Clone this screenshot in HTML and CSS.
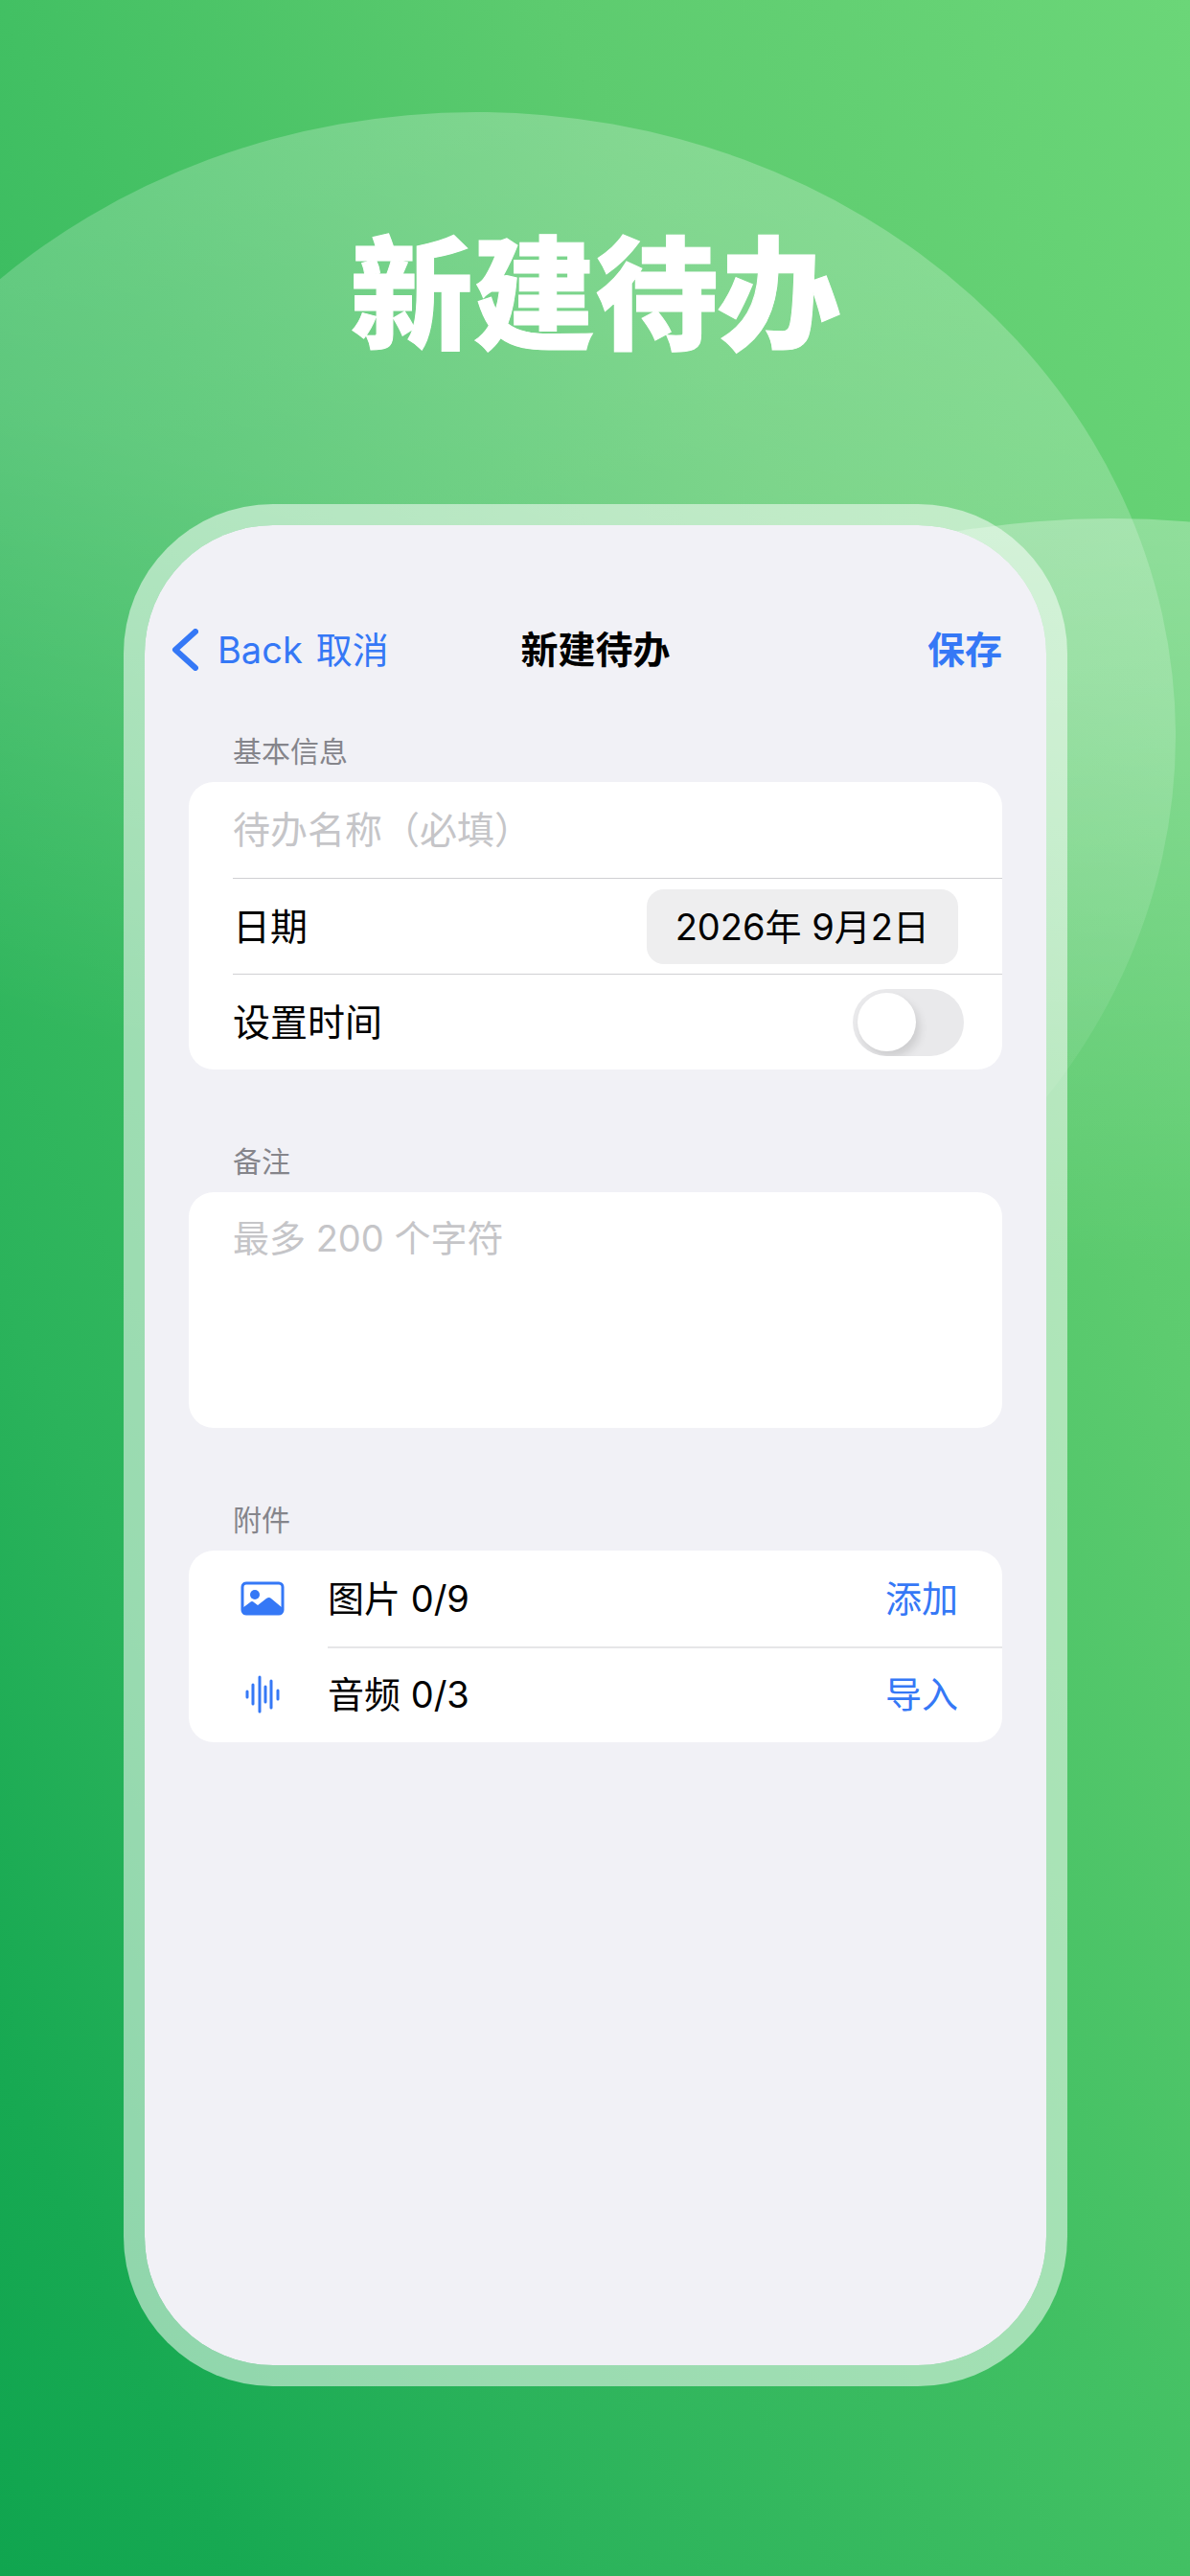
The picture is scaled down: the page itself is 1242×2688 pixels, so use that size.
FILE: index.html
```html
<!DOCTYPE html>
<html lang="zh-CN">
<head>
    <meta charset="UTF-8">
    <meta name="viewport" content="width=device-width, initial-scale=1.0">
    <title>新建待办</title>
    <link rel="stylesheet" href="styles.css">
</head>
<body>
    <svg class="backdrop" viewBox="0 0 1242 2688" preserveAspectRatio="none" aria-hidden="true">
        <defs>
            <linearGradient id="fadeLeft" x1="0.65" y1="0" x2="0.35" y2="1">
                <stop offset="0" stop-color="#fff" stop-opacity="0.24"/>
                <stop offset="0.35" stop-color="#fff" stop-opacity="0.18"/>
                <stop offset="0.8" stop-color="#fff" stop-opacity="0"/>
            </linearGradient>
            <linearGradient id="fadeRight" x1="0" y1="0" x2="0" y2="1">
                <stop offset="0" stop-color="#fff" stop-opacity="0.28"/>
                <stop offset="0.6" stop-color="#fff" stop-opacity="0"/>
            </linearGradient>
        </defs>
        <ellipse cx="497" cy="768" rx="730" ry="651" fill="url(#fadeLeft)"/>
        <ellipse cx="1160" cy="1192" rx="800" ry="651" fill="url(#fadeRight)"/>
    </svg>

    <main class="page">
        <h1 class="headline">新建待办</h1>

        <form class="phone">
            <header class="navbar">
                <div class="nav-left">
                    <a class="back" href="#">
                        <svg class="chevron" viewBox="0 0 28 44" aria-hidden="true">
                            <path d="M25 3 L4 22 L25 41" fill="none" stroke="currentColor" stroke-width="6" stroke-linecap="round" stroke-linejoin="round"/>
                        </svg>
                        Back
                    </a>
                    <button type="button" class="link">取消</button>
                </div>
                <h2 class="nav-title">新建待办</h2>
                <button type="submit" class="link save">保存</button>
            </header>

            <section class="group">
                <h3 class="group-title">基本信息</h3>
                <div class="card">
                    <div class="row">
                        <input type="text" class="field" id="name" aria-label="待办名称" placeholder="待办名称（必填）">
                    </div>
                    <div class="row">
                        <span>日期</span>
                        <button type="button" class="date">2026年 9月2日</button>
                    </div>
                    <div class="row">
                        <label for="setTime">设置时间</label>
                        <input type="checkbox" class="switch" id="setTime" role="switch">
                    </div>
                </div>
            </section>

            <section class="group">
                <h3 class="group-title"><label for="note">备注</label></h3>
                <div class="card">
                    <textarea class="field note" id="note" maxlength="200" placeholder="最多 200 个字符"></textarea>
                </div>
            </section>

            <section class="group">
                <h3 class="group-title">附件</h3>
                <div class="card attachments">
                    <div class="row">
                        <svg class="icon" viewBox="0 0 62 40" aria-hidden="true">
                            <rect x="10" y="4" width="42" height="32" rx="4" fill="none" stroke="currentColor" stroke-width="3"/>
                            <circle cx="23" cy="16" r="5" fill="currentColor"/>
                            <path d="M10 30 L18 24 Q20 22 22 24 L26 27 L35 20 Q38 18 40 20 L52 30 V34 Q52 36 49 36 H13 Q10 36 10 34 Z" fill="currentColor"/>
                        </svg>
                        <span class="label">图片 0/9</span>
                        <button type="button" class="link">添加</button>
                    </div>
                    <div class="row">
                        <svg class="icon" viewBox="0 0 62 40" aria-hidden="true">
                            <path d="M15 17 V23 M21 10 V30 M28 2 V38 M34 12 V28 M40 6 V34 M47 16 V25" fill="none" stroke="currentColor" stroke-width="3" stroke-linecap="round"/>
                        </svg>
                        <span class="label">音频 0/3</span>
                        <button type="button" class="link">导入</button>
                    </div>
                </div>
            </section>
        </form>
    </main>
</body>
</html>
```
FILE: styles.css
```css
* {
    box-sizing: border-box;
}

body {
    margin: 0;
    min-height: 100vh;
    position: relative;
    font-family: Inter, "Noto Sans CJK SC", sans-serif;
    font-size: 38px;
    line-height: 56px;
    color: #000;
    background: linear-gradient(to top right, #10a54f 0%, #17a952 10%, #2bb35b 25%, #42c063 50%, #5dcb6f 73%, #6bd678 100%);
}

/* the two pale ellipses behind the phone */
.backdrop {
    position: absolute;
    top: 0;
    left: 0;
    width: 100%;
    height: 100%;
}

.page {
    position: relative;
    display: flex;
    flex-direction: column;
    min-height: 100vh;
    padding: 216px 128px 198px 129px;
}

.headline {
    margin: 0 0 124px;
    font-size: 128px;
    line-height: 186px;
    font-weight: 900;
    text-align: center;
    color: #fff;
    -webkit-text-stroke: 1px #fff;
}

.phone {
    flex: 1;
    padding: 90px 46px;
    border: 22px solid rgba(255, 255, 255, 0.52);
    border-radius: 156px;
    background: #f1f1f6;
    background-clip: padding-box;
}

.navbar {
    display: grid;
    grid-template-columns: 1fr auto 1fr;
    align-items: center;
    height: 80px;
    margin-bottom: 44px;
}

.nav-left {
    display: flex;
    align-items: center;
    gap: 14px;
    margin-left: -18px;
}

.back {
    display: flex;
    align-items: center;
    gap: 20px;
    color: #3578f6;
    text-decoration: none;
}

.chevron {
    width: 28px;
    height: 44px;
}

.link {
    padding: 0;
    border: none;
    background: none;
    font: inherit;
    color: #3578f6;
    cursor: pointer;
}

.nav-title {
    margin: 0;
    font-size: 39px;
    font-weight: 600;
}

.save {
    justify-self: end;
    font-size: 39px;
    font-weight: 600;
}

.group {
    margin-bottom: 74px;
}

.group-title {
    margin: 0 46px 10px;
    font-size: 30px;
    line-height: 44px;
    font-weight: 400;
    color: #85858b;
}

.card {
    border-radius: 26px;
    background: #fff;
}

.row {
    display: flex;
    align-items: center;
    justify-content: space-between;
    height: 100px;
    margin-left: 46px;
    padding-right: 46px;
    font-size: 39px;
}

.row + .row {
    border-top: 1px solid #d0d0d3;
}

.field {
    display: block;
    width: 100%;
    padding: 0;
    border: none;
    outline: none;
    background: none;
    font: inherit;
    color: #000;
}

.field::placeholder {
    color: #c5c5c8;
    opacity: 1;
}

.note {
    height: 246px;
    padding: 20px 46px;
    resize: none;
}

.date {
    height: 78px;
    padding: 0 30px;
    border: none;
    border-radius: 18px;
    background: #eeeeef;
    font: inherit;
    font-size: 38px;
    color: #000;
}

.switch {
    appearance: none;
    flex: none;
    display: flex;
    align-items: center;
    width: 116px;
    height: 70px;
    margin: 0 -6px 0 0;
    padding: 0 5px;
    border-radius: 35px;
    background: #e9e9eb;
    overflow: hidden;
}

.switch::before {
    content: "";
    width: 61px;
    height: 61px;
    border-radius: 50%;
    background: #fff;
    box-shadow: 4px 6px 10px rgba(0, 0, 0, 0.12);
}

.switch:checked {
    justify-content: flex-end;
    background: #34c759;
}

.attachments .row {
    margin-left: 0;
    padding-left: 46px;
    font-size: 38px;
}

.attachments .row + .row {
    border-top: none;
    background: linear-gradient(#e6e6e8, #e6e6e8) right top / calc(100% - 145px) 2px no-repeat;
}

.icon {
    width: 62px;
    height: 40px;
    margin-right: 37px;
    color: #3578f6;
}

.label {
    flex: 1;
}
```
